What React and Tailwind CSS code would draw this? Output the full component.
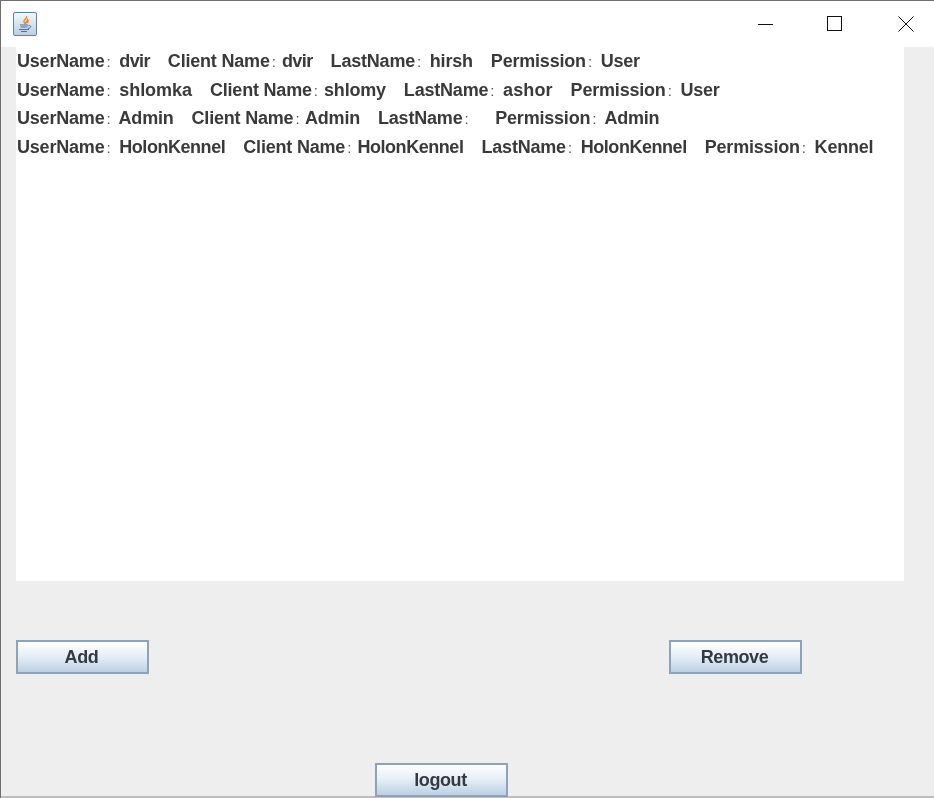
const rows = [
  [["UserName", "dvir"], ["Client Name", "dvir"], ["LastName", "hirsh"], ["Permission", "User"]],
  [["UserName", "shlomka"], ["Client Name", "shlomy"], ["LastName", "ashor"], ["Permission", "User"]],
  [["UserName", "Admin"], ["Client Name", "Admin"], ["LastName", ""], ["Permission", "Admin"]],
  [["UserName", "HolonKennel"], ["Client Name", "HolonKennel"], ["LastName", "HolonKennel"], ["Permission", "Kennel"]],
];

const valueClass = {
  dvir: "tracking-[-0.6px]",
  HolonKennel: "tracking-[-0.45px]",
  shlomka: "tracking-[-0.05px]",
  ashor: "tracking-[0.1px]",
};

function Btn({ children }) {
  return (
    <button className="relative z-10 block w-[133px] h-[34px] shrink-0 border-2 border-[#8fa3b8] bg-gradient-to-b from-[#ffffff] via-[#e4edf6] to-[#bcd0e4] text-[18px] leading-[30px] font-bold tracking-[-0.4px] text-[#333a40] text-center pr-[2px]">
      <span className="blur-[0.3px]">{children}</span>
    </button>
  );
}

function JavaIcon() {
  return (
    <div className="w-6 h-6 rounded-[2px] border border-[#5f83a5] bg-gradient-to-b from-[#f4f8fb] to-[#b9cfe2] flex items-center justify-center">
      <svg width="18" height="18" viewBox="0 0 18 18" fill="none" className="blur-[0.3px]">
        <path d="M10.5 1 C12 3.5 7 4.5 8 7 C8.4 8 9 8.6 9.5 9.2 C8.6 7.5 12.5 6 11.5 3.8 M11.5 5 C13 5 12 7 10.5 8" stroke="#f08a24" strokeWidth="1.4" />
        <path d="M4 10 H12 M4.5 12 H11.5 M3 14.5 H13 M5 16.5 H11" stroke="#4e6f8f" strokeWidth="1.1" />
        <path d="M12.5 10.5 C15.5 10 15.5 13 12 13.5" stroke="#4e6f8f" strokeWidth="1" />
      </svg>
    </div>
  );
}

export default function App() {
  return (
    <div className="relative w-[934px] h-[798px] overflow-hidden bg-[#eeeeee] border-l border-t border-[#6e6e6e] flex flex-col font-['Liberation_Sans',Arial,sans-serif]">
      <div className="absolute left-[-1px] top-[248px] w-px h-[10px] bg-[#8a3a6a]" />
      <div className="absolute inset-x-0 bottom-0 h-[2px] bg-[#bdbdbd]" />
      <div className="h-[46px] shrink-0 bg-white flex items-center pl-3">
        <JavaIcon />
        <div className="ml-auto flex items-center">
          <svg width="16" height="16" viewBox="0 0 16 16" className="mr-[54px]"><path d="M1 8.5 H16" stroke="#111" /></svg>
          <svg width="16" height="16" viewBox="0 0 16 16" className="mr-[55px]"><rect x="0.5" y="0.5" width="14" height="14" fill="none" stroke="#111" /></svg>
          <svg width="16" height="16" viewBox="0 0 16 16" className="mr-[20px]"><path d="M0.5 0.5 L15.5 15.5 M15.5 0.5 L0.5 15.5" stroke="#111" /></svg>
        </div>
      </div>
      <div className="flex-1 flex flex-col">
        <div className="ml-[15px] w-[888px] h-[534px] shrink-0 bg-white pt-[0.4px] pl-[1px]">
          {rows.map((r, i) => (
            <div key={i} className="flex gap-[18px] h-[28.6px] items-center text-[18px] font-bold text-[#3a3a3a] tracking-[-0.2px] whitespace-pre blur-[0.3px]">
              {r.map(([k, v], j) => (
                <span key={j} className="flex-none">
                  <span>{k}</span>
                  <span className={j === 1 ? "inline-block font-normal text-[15px] text-[#555] ml-[2px] mr-[1.5px]" : "inline-block font-normal text-[15px] text-[#555] ml-[2px] mr-[4px]"}>:</span>{" "}
                  <span className={valueClass[v] || ""}>{v}</span>
                </span>
              ))}
            </div>
          ))}
        </div>
        <div className="flex ml-[15px] mt-[59px]">
          <Btn>Add</Btn>
          <div className="ml-[520px]"><Btn>Remove</Btn></div>
        </div>
        <div className="ml-[374px] mt-[89px]">
          <Btn>logout</Btn>
        </div>
      </div>
    </div>
  );
}
